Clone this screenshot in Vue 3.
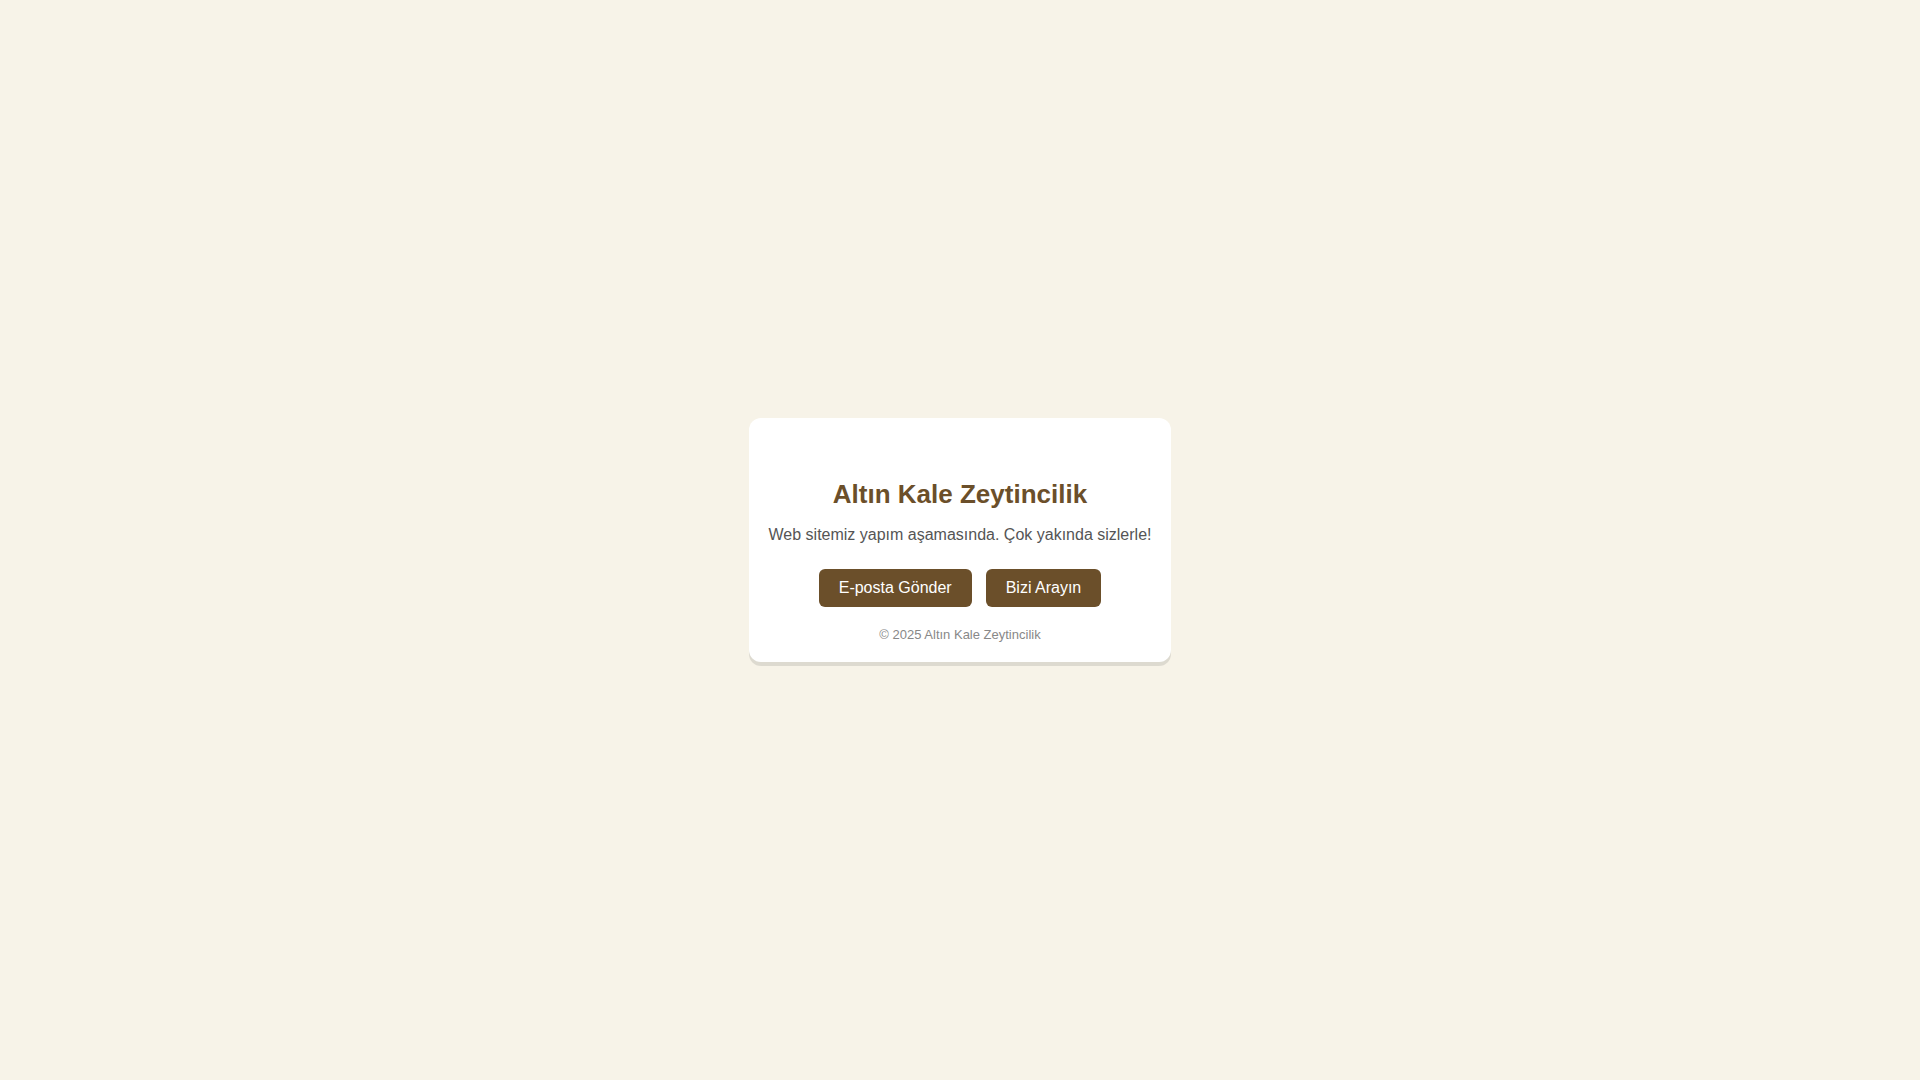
<template>
  <div class="soon-page">
    <main class="soon-card">
      <h1 class="soon-card__title">{{ company }}</h1>
      <p class="soon-card__text">Web sitemiz yapım aşamasında. Çok yakında sizlerle!</p>
      <div class="soon-card__actions">
        <a
          v-for="link in links"
          :key="link.label"
          class="soon-card__btn"
          :href="link.href"
        >{{ link.label }}</a>
      </div>
      <footer class="soon-card__footer">© 2025 {{ company }}</footer>
    </main>
  </div>
</template>

<script setup>
const company = 'Altın Kale Zeytincilik'

const links = [
  { label: 'E-posta Gönder', href: 'mailto:' },
  { label: 'Bizi Arayın', href: 'tel:' },
]
</script>

<style>
body {
  margin: 0;
  background: #F7F3E8;
}
</style>

<style scoped>
.soon-page {
  display: flex;
  align-items: center;
  justify-content: center;
  min-height: 100vh;
  font-family: 'Liberation Sans', Arial, sans-serif;
  font-size: 16px;
}
.soon-card {
  padding: 61px 20px 20px;
  background: #FFFFFF;
  border-radius: 12px;
  box-shadow: 0 4px 0 rgba(0, 0, 0, 0.1);
  text-align: center;
}
.soon-card__title {
  margin: 0 0 17px;
  font-size: 26px;
  line-height: 30px;
  color: #6B4F2A;
}
.soon-card__text {
  margin: 0 0 25px;
  line-height: 18px;
  color: #555555;
}
.soon-card__actions {
  display: flex;
  justify-content: center;
  gap: 14px;
  margin-bottom: 20px;
}
.soon-card__btn {
  padding: 10px 20px;
  line-height: 18px;
  background: #6B4F2A;
  color: #FFFFFF;
  border-radius: 6px;
  text-decoration: none;
}
.soon-card__footer {
  font-size: 13px;
  line-height: 15px;
  color: #888888;
}
</style>
